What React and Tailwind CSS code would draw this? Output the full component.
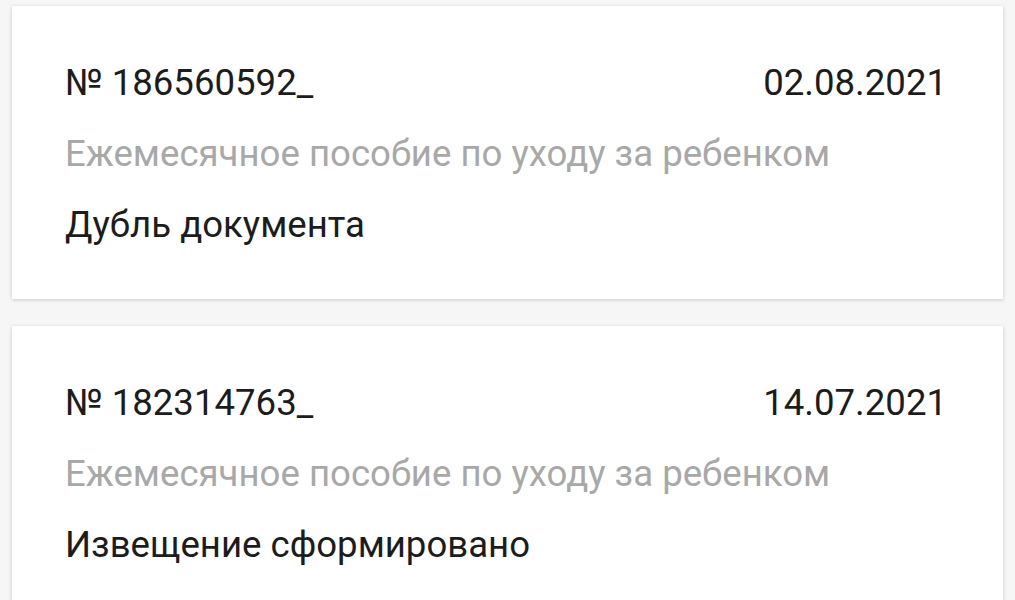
const items = [
  {
    number: "№ 186560592_",
    date: "02.08.2021",
    title: "Ежемесячное пособие по уходу за ребенком",
    status: "Дубль документа",
  },
  {
    number: "№ 182314763_",
    date: "14.07.2021",
    title: "Ежемесячное пособие по уходу за ребенком",
    status: "Извещение сформировано",
  },
];

function DocCard({ item }) {
  return (
    <div className="bg-white shadow-[0_1px_4px_rgba(0,0,0,0.18)] pl-[53px] pr-[56px] pt-[42px] pb-[38px]">
      <div className="flex items-center justify-between h-[71px] text-[#1c1c1c]">
        <span>{item.number}</span>
        <span>{item.date}</span>
      </div>
      <div className="h-[71px] flex items-center text-[#a8a8a8]">{item.title}</div>
      <div className="h-[71px] flex items-center text-[#1c1c1c]">{item.status}</div>
    </div>
  );
}

export default function App() {
  return (
    <div
      className="w-[1015px] h-[600px] overflow-hidden bg-[#f6f6f6] pl-[12px] pr-[12px] pt-[6px] flex flex-col gap-[27px] text-[36.6px] leading-none"
      style={{ fontFamily: "Roboto, 'Noto Sans', sans-serif" }}
    >
      {items.map((item) => (
        <DocCard key={item.number} item={item} />
      ))}
    </div>
  );
}
